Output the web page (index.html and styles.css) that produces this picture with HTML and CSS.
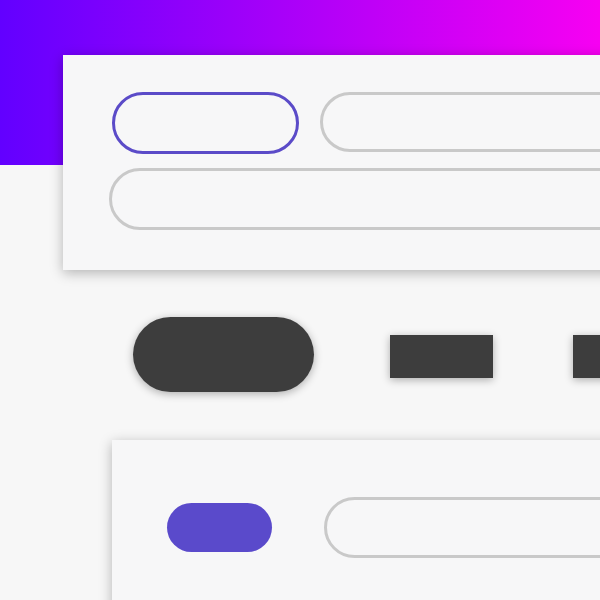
FILE: index.html
```html
<!DOCTYPE html>
<html lang="en">
<head>
    <meta charset="UTF-8">
    <meta name="viewport" content="width=device-width, initial-scale=1.0">
    <title>Document</title>
    <link rel="stylesheet" href="styles.css">
</head>
<body>
    <div class="card top-card">
        <div class="row first-row">
            <div class="pill pill-active"></div>
            <div class="pill pill-grow"></div>
        </div>
        <div class="pill pill-wide"></div>
    </div>

    <div class="toolbar">
        <div class="dark-pill"></div>
        <div class="dark-box"></div>
        <div class="dark-box"></div>
    </div>

    <div class="card bottom-card">
        <div class="row second-row">
            <div class="chip"></div>
            <div class="pill pill-grow tall"></div>
        </div>
    </div>
</body>
</html>
```

FILE: styles.css
```css
html, body{
    margin:0;
    height:600px;
    overflow:hidden;
}
body{
    background:linear-gradient(to right, #6200ff, #f700f2) no-repeat top left / 100% 165px, #f7f7f7;
    padding-top:55px;
    box-sizing:border-box;
}
.card{
    background-color:#f7f7f8;
    box-shadow:0 3px 12px rgba(0,0,0,0.28);
    width:640px;
    box-sizing:border-box;
}
.top-card{
    margin-left:63px;
    height:215px;
    padding:37px 0 0 46px;
}
.row{
    display:flex;
    align-items:center;
}
.first-row{
    margin-left:3px;
    gap:21px;
    margin-bottom:14px;
}
.pill{
    box-sizing:border-box;
    height:60px;
    border:3px solid #c9c9c9;
    border-radius:32px;
}
.pill-active{
    width:187px;
    height:62px;
    border-color:#5b4bc8;
    flex:none;
}
.pill-grow{
    flex:1;
    margin-top:-2px;
}
.pill-wide{
    height:62px;
}
.toolbar{
    display:flex;
    align-items:center;
    margin:47px 0 0 133px;
    height:75px;
}
.dark-pill{
    flex:none;
    width:181px;
    height:75px;
    border-radius:38px;
    background-color:#3d3d3d;
    box-shadow:0 2px 8px rgba(0,0,0,0.3);
    margin-right:76px;
}
.dark-box{
    flex:none;
    width:103px;
    height:43px;
    margin-top:4px;
    background-color:#3d3d3d;
    box-shadow:0 2px 8px rgba(0,0,0,0.3);
}
.dark-box + .dark-box{
    margin-left:80px;
}
.bottom-card{
    margin:48px 0 0 112px;
    height:200px;
    padding:57px 0 0 55px;
}
.second-row{
    gap:52px;
}
.chip{
    flex:none;
    width:105px;
    height:49px;
    border-radius:25px;
    background-color:#5a4acb;
}
.tall{
    height:61px;
    margin-top:0;
}
```
